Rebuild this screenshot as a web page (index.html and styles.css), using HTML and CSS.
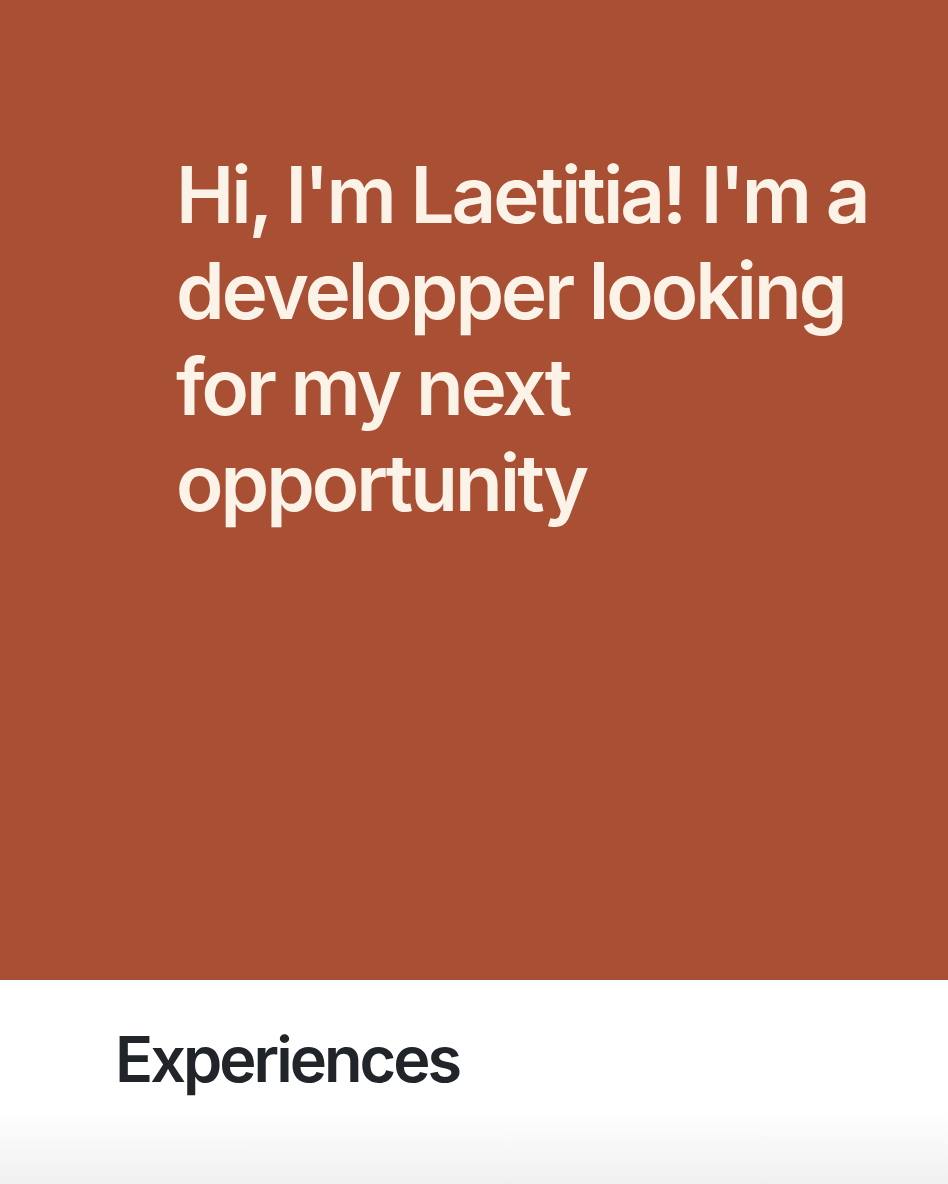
FILE: index.html
```html
<!DOCTYPE html>
<html lang="en">
<head>
<meta charset="utf-8">
<title>Laetitia</title>
<link rel="stylesheet" href="styles.css">
</head>
<body>
<header class="hero">
  <h1 class="hero-title">Hi, I'm Laetitia! I'm a developper looking for my next opportunity</h1>
</header>
<section class="experiences">
  <h2 class="section-title">Experiences</h2>
</section>
</body>
</html>
```
FILE: styles.css
```css
* { box-sizing: border-box; }
html, body { margin: 0; padding: 0; }
body {
  font-family: Inter, "Noto Sans", sans-serif;
  background: #ffffff;
  color: #212529;
}
.hero {
  background: #a84f34;
  height: 980px;
  padding: 147px 40px 0 176px;
}
.hero-title {
  margin: 0;
  max-width: 720px;
  font-size: 78px;
  line-height: 96px;
  font-weight: 600;
  color: #fcf3e8;
  letter-spacing: -3px;
}
.experiences {
  height: 204px;
  padding: 41px 0 0 115px;
  background: linear-gradient(to bottom, #ffffff 0px, #ffffff 130px, #f0f0f0 204px);
}
.section-title {
  margin: 0;
  font-size: 63px;
  line-height: 76px;
  font-weight: 600;
  color: #212529;
  letter-spacing: -3px;
}
```
